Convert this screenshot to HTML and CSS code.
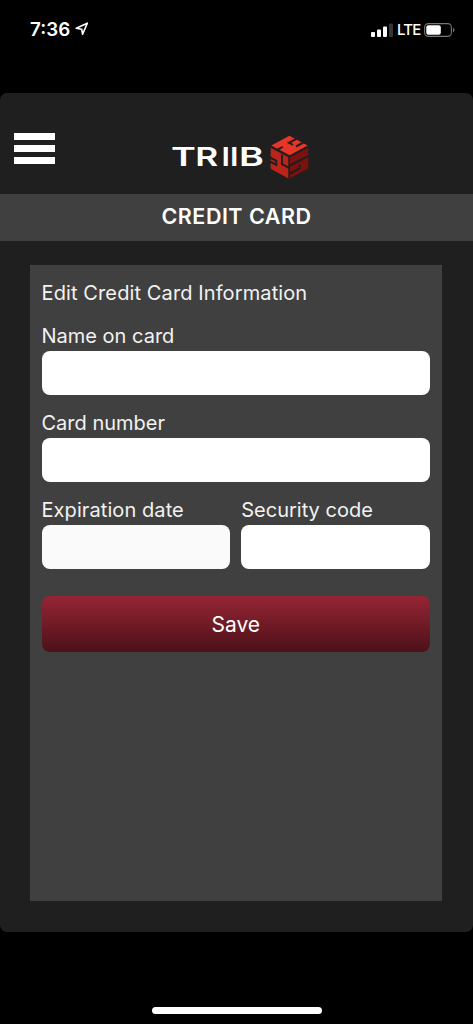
FILE: index.html
```html
<!DOCTYPE html>
<html lang="en">
<head>
<meta charset="utf-8">
<title>Credit Card</title>
<link rel="stylesheet" href="styles.css">
</head>
<body>
<div class="screen">
  <div class="status">
    <div class="clock"><span class="time">7:36</span>
      <svg class="location" width="14" height="14" viewBox="0 0 14 14"><path d="M1.2 6.2 12.3 1.2 7.6 12.3 6.7 7.2Z" fill="none" stroke="#fff" stroke-width="1.6" stroke-linejoin="round"/></svg>
    </div>
    <div class="signals">
      <svg width="22" height="14" viewBox="0 0 22 14"><g fill="#fff"><rect x="0" y="9" width="4" height="5" rx="1"/><rect x="6" y="6.5" width="4" height="7.5" rx="1"/><rect x="12" y="3.5" width="4" height="10.5" rx="1"/></g><rect x="18" y="0.5" width="4" height="13.5" rx="1" fill="#363636"/></svg>
      <span class="network">LTE</span>
      <svg class="battery" width="32" height="14" viewBox="0 0 32 14"><rect x=".6" y=".6" width="26.8" height="12.8" rx="3.8" fill="none" stroke="#777" stroke-width="1.1"/><rect x="2.3" y="2.3" width="14.5" height="9.4" rx="2" fill="#fff"/><path d="M29 4.7q3 2.3 0 4.6z" fill="#777"/></svg>
    </div>
  </div>
  <main class="app">
    <header class="header">
      <div class="menu"><span></span><span></span><span></span></div>
      <svg class="logo" width="146" height="56" viewBox="0 0 146 56">
        <g class="wordmark">
          <text transform="translate(1 38.4) scale(1.48 1)">T</text>
          <text transform="translate(25.2 38.4) scale(1.38 1)">R</text>
          <text transform="translate(51.4 38.4) scale(1.2 1)">I</text>
          <text transform="translate(60 38.4) scale(1.2 1)">I</text>
          <text transform="translate(69 38.4) scale(1.48 1)">B</text>
        </g>
        <g transform="translate(92 .5) scale(.3333)">
          <path fill="#e83527" d="M28 51 82 22 137 51 83 80Z"/>
          <path fill="#bd2419" d="M26 58 79 86V150L26 121Z"/>
          <path fill="#7b120e" d="M139 58 84 86V150L139 119Z"/>
          <g fill="none" stroke="#1f1f1f" stroke-width="6">
            <path d="M103 31 81 43 93 49M124 42 102 54M45 64 62 55"/>
            <path d="M24 87 43 97V109L24 99M60 78V107L81 118"/>
            <path d="M140 82 113 96 84 111M84 135 113 120V108"/>
          </g>
        </g>
      </svg>
    </header>
    <h1 class="title">CREDIT CARD</h1>
    <form class="panel">
      <h2 class="intro">Edit Credit Card Information</h2>
      <label class="field"><span>Name on card</span><input type="text"></label>
      <label class="field"><span>Card number</span><input type="text"></label>
      <div class="row">
        <label class="field"><span class="wide">Expiration date</span><input class="muted" type="text"></label>
        <label class="field"><span>Security code</span><input type="text"></label>
      </div>
      <button class="save" type="button">Save</button>
    </form>
  </main>
  <div class="home"></div>
</div>
</body>
</html>
```
FILE: styles.css
```css
* { box-sizing: border-box; }
body { margin: 0; background: #000; color: #fff; font-family: Inter, "Liberation Sans", sans-serif; }
.screen { width: 473px; height: 1024px; overflow: hidden; display: flex; flex-direction: column; align-items: center; background: #000; }
.status { width: 100%; height: 92.5px; flex: none; display: flex; justify-content: space-between; padding: 17px 17px 0 30px; }
.clock { display: flex; height: 24px; align-items: center; gap: 5px; }
.time { font-size: 18.8px; font-weight: 600; }
.location { margin-top: -1px; }
.signals { display: flex; height: 25px; align-items: center; }
.network { font-size: 15px; font-weight: 500; margin-left: 4px; letter-spacing: -.8px; width: 26px; }
.battery { margin-left: 1px; }
.app { width: 100%; height: 839px; flex: none; background: #1f1f1f; border-radius: 7px; display: flex; flex-direction: column; }
.header { height: 101px; flex: none; display: flex; align-items: flex-start; padding: 35.5px 0 0 14px; }
.menu { width: 41px; display: flex; flex-direction: column; gap: 5.5px; padding-top: 5px; }
.menu span { height: 6.6px; background: #fff; }
.logo { margin-left: 115px; }
.wordmark { font-family: Inter, sans-serif; font-size: 25.5px; font-weight: 600; fill: #fff; }
.title { margin: 0; height: 47.5px; flex: none; background: #404040; display: flex; align-items: center; justify-content: center; font-size: 21.5px; line-height: 24px; font-weight: 600; letter-spacing: .5px; padding-bottom: 3px; }
.panel { width: 412.5px; height: 636px; margin: 24px 0 0 29.5px; padding: 15px 12px; background: #404040; display: flex; flex-direction: column; }
.intro, .field span { margin: 0; font-size: 20px; line-height: 26px; font-weight: 400; color: #f2f2f2; white-space: nowrap; }
.intro { margin-bottom: 16.5px; letter-spacing: .11px; }
.field { display: flex; flex-direction: column; margin-bottom: 14.3px; }
.field .wide { letter-spacing: .08px; }
.field input { width: 100%; height: 44px; margin-top: 2.8px; border: 0; border-radius: 8px; background: #fff; }
.field input.muted { background: #fafafa; }
.row { display: grid; grid-template-columns: 1fr 1fr; gap: 11px; }
.save { height: 56.5px; margin-top: 12px; border: 0; border-radius: 8px; background: linear-gradient(#962535, #4c1119); color: #fff; font: 400 21px Inter, sans-serif; }
.home { width: 170px; height: 7px; margin-top: 75.5px; border-radius: 4px; background: #fff; }
```
